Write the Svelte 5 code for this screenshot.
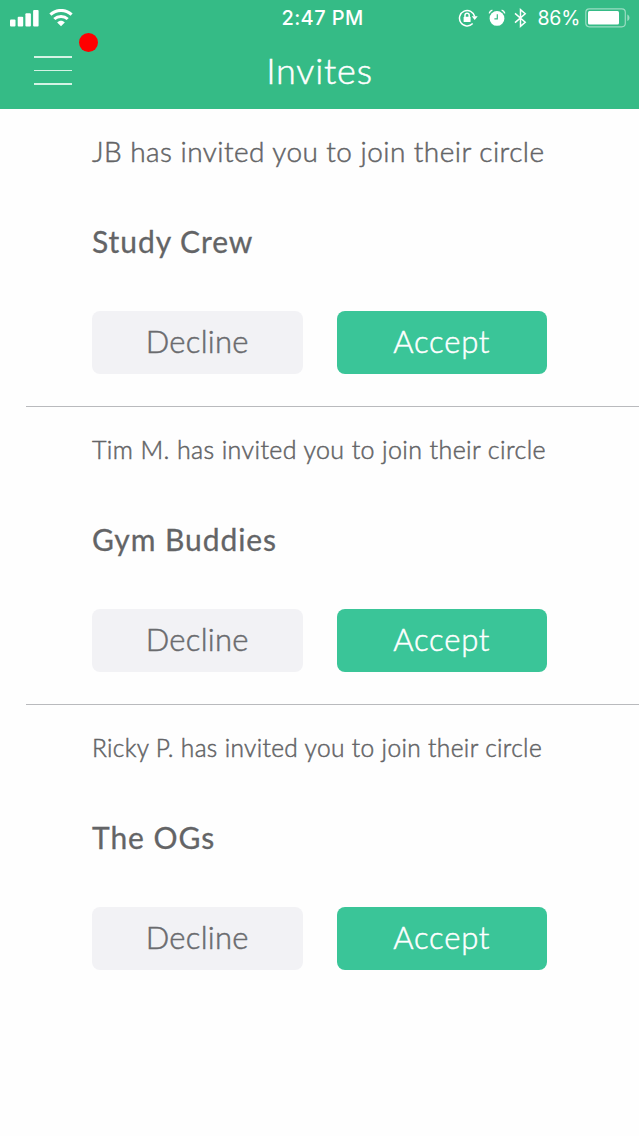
<script lang="ts">
  interface Invite {
    id: number
    from: string
    circle: string
    size: 'lg' | 'md' | 'sm'
  }

  let invites = $state<Invite[]>([
    { id: 1, from: 'JB', circle: 'Study Crew', size: 'lg' },
    { id: 2, from: 'Tim M.', circle: 'Gym Buddies', size: 'md' },
    { id: 3, from: 'Ricky P.', circle: 'The OGs', size: 'sm' },
  ])

  function respond(id: number) {
    invites = invites.filter((i) => i.id !== id)
  }
</script>

<div class="screen">
  <header>
    <div class="status-bar">
      <div class="status-left">
        <svg width="29" height="18" viewBox="0 0 29 18" fill="#fff">
          <rect x="0" y="10.5" width="5.5" height="7" rx="1" />
          <rect x="7.7" y="7.7" width="5.5" height="9.8" rx="1" />
          <rect x="15.4" y="4.3" width="5.5" height="13.2" rx="1" />
          <rect x="23.1" y="1" width="5.5" height="16.5" rx="1" />
        </svg>
        <svg width="24" height="18" viewBox="0 0 24 18" fill="none" stroke="#fff" stroke-width="3">
          <path d="M1.4 5.6C7.3 0 16.7 0 22.6 5.6" />
          <path d="M5.3 10C9 6.5 15 6.5 18.7 10" />
          <path d="M12 17.3L8.2 13.4C10.3 11.2 13.7 11.2 15.8 13.4Z" fill="#fff" stroke="none" />
        </svg>
      </div>
      <span class="time">2:47 PM</span>
      <div class="status-right">
        <svg class="lock" width="20" height="20" viewBox="0 0 20 20" fill="none" stroke="#fff" stroke-width="1.5">
          <path d="M14.7 15.6A7.7 7.7 0 1 1 16.7 8.5" />
          <path d="M13.7 8.3H19.7L16.7 12Z" fill="#fff" stroke="none" />
          <rect x="5.6" y="8.8" width="7" height="5.2" rx="0.6" fill="#fff" stroke="none" />
          <path d="M7 9V7.3a2.1 2.1 0 0 1 4.2 0V9" />
        </svg>
        <svg class="alarm" width="18" height="18" viewBox="0 0 18 18" fill="none">
          <circle cx="9" cy="9.4" r="7.4" fill="#fff" />
          <path d="M1.2 4.4C1.6 2.8 2.8 1.5 4.4 1.1M16.8 4.4C16.4 2.8 15.2 1.5 13.6 1.1" stroke="#fff" stroke-width="1.4" />
          <path d="M9.3 5.2V9.8H6.4" stroke="#35bb86" stroke-width="1.2" />
        </svg>
        <svg class="bluetooth" width="13" height="20" viewBox="0 0 13 20" fill="none" stroke="#fff" stroke-width="1.5">
          <path d="M1 5.4L11.2 14.2L6.5 18.3V1.7L11.2 5.8L1 14.6" />
        </svg>
        <span class="percent">86%</span>
        <svg class="battery" width="46" height="20" viewBox="0 0 46 20">
          <rect x="0.8" y="0.8" width="39.5" height="18" rx="3.5" fill="none" stroke="#fff" stroke-opacity="0.5" stroke-width="1.2" />
          <rect x="3" y="3" width="31" height="13.6" rx="1.5" fill="#fff" />
          <path d="M42.3 6.5C45.2 7.8 45.2 11.8 42.3 13.1Z" fill="#fff" fill-opacity="0.5" />
        </svg>
      </div>
    </div>
    <div class="nav-bar">
      <button class="menu" aria-label="Menu">
        <span class="line"></span>
        <span class="line"></span>
        <span class="line"></span>
        <span class="badge"></span>
      </button>
      <h1>Invites</h1>
    </div>
  </header>

  <main>
    {#each invites as invite (invite.id)}
      <section class="invite">
        <p class="message {invite.size}">{invite.from} has invited you to join their circle</p>
        <h2 class="circle">{invite.circle}</h2>
        <div class="actions">
          <button class="btn decline" onclick={() => respond(invite.id)}>Decline</button>
          <button class="btn accept" onclick={() => respond(invite.id)}>Accept</button>
        </div>
      </section>
    {/each}
  </main>
</div>

<style>
  :global(body) {
    margin: 0;
    background: #fefefe;
  }

  .screen {
    min-height: 1136px;
    font-family: Lato, 'Liberation Sans', sans-serif;
    color: #636466;
  }

  header {
    height: 109px;
    background: #35bb86;
    color: #fff;
  }

  .status-bar {
    display: grid;
    grid-template-columns: 1fr auto 1fr;
    align-items: center;
    height: 35px;
    padding: 0 8px 0 10px;
    font-family: Inter, 'Liberation Sans', sans-serif;
  }

  .status-left {
    display: flex;
    gap: 10px;
  }

  .time {
    padding-left: 4px;
    font-size: 20px;
    font-weight: 500;
    letter-spacing: 0.4px;
  }

  .status-right {
    display: flex;
    align-items: center;
    justify-content: flex-end;
  }

  .alarm {
    margin-left: 10px;
  }

  .bluetooth {
    margin-left: 8px;
  }

  .percent {
    margin-left: 11px;
    font-size: 19.5px;
    letter-spacing: -0.3px;
  }

  .battery {
    margin-left: 5px;
  }

  .nav-bar {
    display: grid;
    grid-template-columns: 1fr auto 1fr;
    height: 74px;
    padding: 0 34px;
  }

  .menu {
    position: relative;
    display: flex;
    flex-direction: column;
    gap: 12px;
    width: 38px;
    height: 51px;
    padding: 21px 0 0;
    background: none;
    border: none;
    cursor: pointer;
  }

  .line {
    flex: none;
    width: 38px;
    height: 1.5px;
    background: #d5f3e5;
  }

  .badge {
    position: absolute;
    top: -2px;
    left: 45px;
    width: 19px;
    height: 19px;
    border-radius: 50%;
    background: #fe0000;
  }

  h1 {
    margin: 15px 0 0;
    font-size: 36px;
    line-height: 40px;
    font-weight: 300;
    letter-spacing: 0.8px;
    -webkit-text-stroke: 0.5px currentColor;
  }

  .invite {
    box-sizing: border-box;
    height: 298px;
    margin-left: 26px;
    padding: 22px 92px 0 66px;
    border-bottom: 1px solid #b9babd;
  }

  .invite:last-child {
    border-bottom: none;
  }

  .message {
    margin: 0;
    height: 40px;
    line-height: 40px;
    font-weight: 300;
    white-space: nowrap;
    -webkit-text-stroke: 0.5px currentColor;
  }

  .message.lg {
    font-size: 28px;
    letter-spacing: 0.45px;
  }

  .message.md {
    font-size: 25px;
    letter-spacing: 0.38px;
  }

  .message.sm {
    font-size: 24.5px;
    line-height: 42px;
    letter-spacing: 0.36px;
  }

  .circle {
    margin: 50px 0 0;
    font-size: 30px;
    line-height: 40px;
    font-weight: 400;
    letter-spacing: 0.95px;
    -webkit-text-stroke: 0.3px currentColor;
  }

  .actions {
    display: flex;
    gap: 34px;
    margin-top: 50px;
  }

  .btn {
    width: 210.5px;
    height: 63px;
    padding: 0 0 4px;
    border: none;
    border-radius: 8px;
    font-family: inherit;
    font-size: 31px;
    font-weight: 300;
    letter-spacing: 0.8px;
    cursor: pointer;
    -webkit-text-stroke: 0.5px currentColor;
  }

  .decline {
    background: #f2f2f5;
    color: #6a6b6e;
    letter-spacing: 0.3px;
  }

  .accept {
    background: #3ac598;
    color: #fff;
  }
</style>
